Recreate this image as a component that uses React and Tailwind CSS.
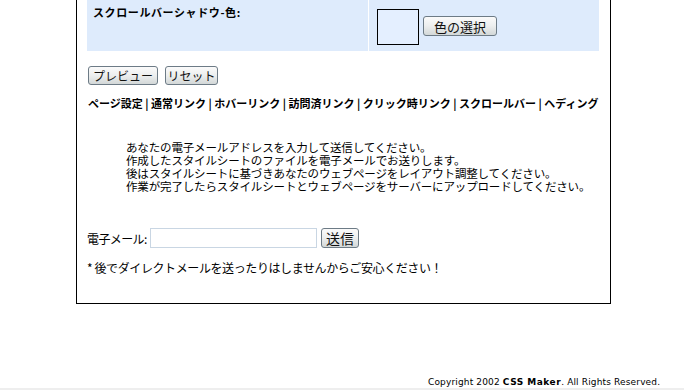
import React from "react";

const jp = { fontFamily: '"MS PGothic","Noto Sans CJK JP","Noto Sans",sans-serif' };

function Btn({ children, className = "" }) {
  return (
    <button
      className={
        "flex items-center justify-center rounded-[3px] border border-[#6d7b86] bg-gradient-to-b from-[#fbfbfb] via-[#eceeee] to-[#d3d8d8] text-[12px] leading-none text-[#111] " +
        className
      }
      style={jp}
    >
      {children}
    </button>
  );
}

export default function App() {
  return (
    <div className="relative h-[390px] w-[684px] overflow-hidden bg-white text-black" style={jp}>
      <div className="ml-[76px] h-[304px] w-[535px] border-x border-b border-black pl-[10px] pr-[11px]">
        <div className="flex h-[51px] gap-px">
          <div className="w-[281px] bg-[#deebfc] pl-[6px] pt-[5px] text-[11px] font-bold leading-[14px] tracking-[0.6px]">
            スクロールバーシャドウ-色:
          </div>
          <div className="flex flex-1 items-start bg-[#deebfc] pl-[8px] pt-[9px]">
            <div className="h-[36px] w-[42px] border border-black bg-[#e4efff]" />
            <Btn className="ml-[4px] mt-[7px] h-[20px] w-[74px] text-[13px]">色の選択</Btn>
          </div>
        </div>
        <div className="mt-[15px] flex gap-[7px] pl-px">
          <Btn className="h-[19px] w-[70px]">プレビュー</Btn>
          <Btn className="h-[19px] w-[53px]">リセット</Btn>
        </div>
        <div className="mt-[11px] whitespace-nowrap pl-px text-[11px] font-bold leading-[14px] tracking-[0px]">
          ページ設定 | 通常リンク | ホバーリンク | 訪問済リンク | クリック時リンク | スクロールバー | ヘディング
        </div>
        <div className="ml-[39px] mt-[31px] whitespace-nowrap text-[11.5px] leading-[13px] tracking-[-0.15px]">
          <p>あなたの電子メールアドレスを入力して送信してください。</p>
          <p>作成したスタイルシートのファイルを電子メールでお送りします。</p>
          <p>後はスタイルシートに基づきあなたのウェブページをレイアウト調整してください。</p>
          <p>作業が完了したらスタイルシートとウェブページをサーバーにアップロードしてください。</p>
        </div>
        <div className="mt-[34px] flex items-center">
          <span className="w-[63px] pt-[3px] text-[12px] tracking-[-0.6px]">電子メール:</span>
          <input className="h-[20px] w-[167px] border border-[#c9d6e3] bg-white" />
          <Btn className="ml-[4px] h-[20px] w-[38px] text-[14px]">送信</Btn>
        </div>
        <p className="mt-[13px] text-[12px] leading-[14px] tracking-[-0.4px]">
          * 後でダイレクトメールを送ったりはしませんからご安心ください！
        </p>
      </div>
      <div
        className="absolute bottom-[3px] left-[428px] whitespace-nowrap text-[9px] leading-none tracking-[0.15px]"
        style={{ fontFamily: '"DejaVu Sans",sans-serif' }}
      >
        Copyright 2002 <span className="font-bold tracking-[0.5px]">CSS Maker</span>. All Rights Reserved.
      </div>
      <div className="absolute bottom-0 left-0 h-[2px] w-full bg-[#eeeeee]" />
    </div>
  );
}
